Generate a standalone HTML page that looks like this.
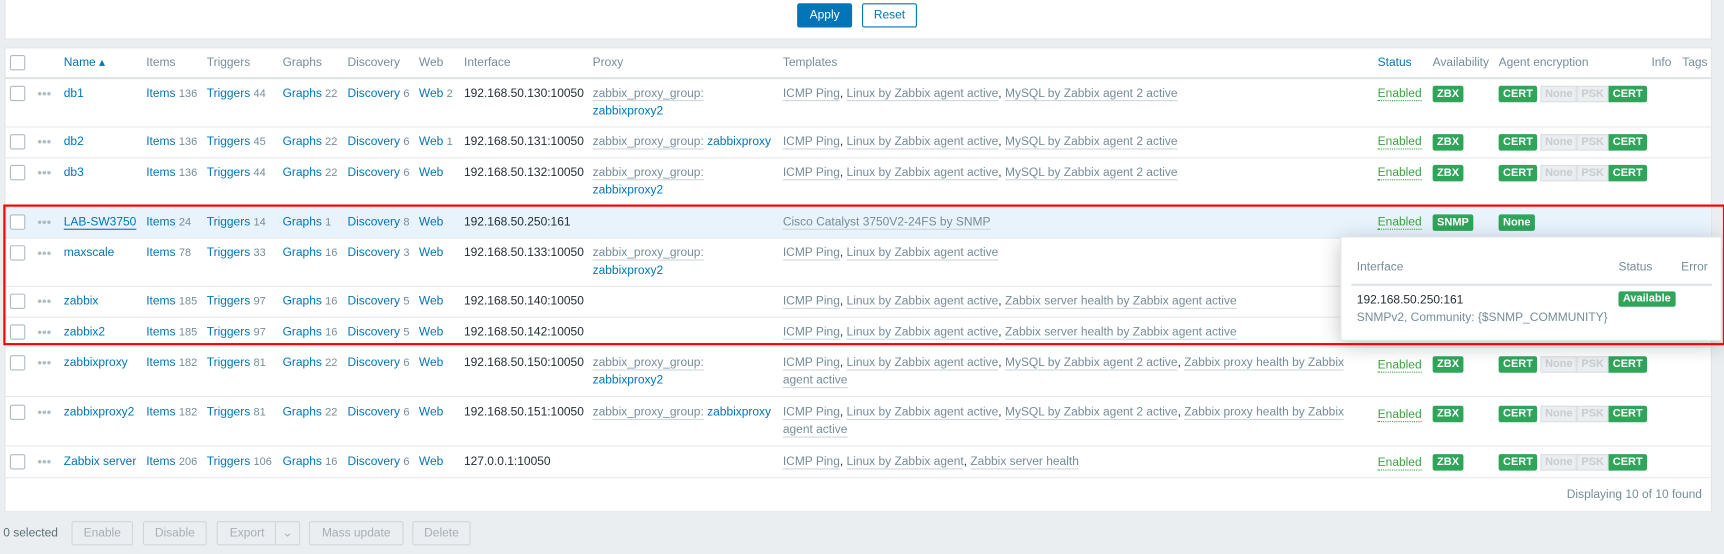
<!DOCTYPE html>
<html><head><meta charset="utf-8"><style>
*{box-sizing:border-box;margin:0;padding:0}
html,body{width:1724px;height:554px;overflow:hidden;background:#ebeef0}
#w{position:absolute;left:0;top:0;width:1568px;height:504px;transform:scale(1.0995);transform-origin:0 0;font-family:"Liberation Sans",Arial,sans-serif;font-size:10.9px;color:#1f2c33}
.abs{position:absolute;white-space:nowrap}
.panel{position:absolute;background:#fff;border:1px solid #dfe4e7}
a,.l{color:#0275b8;text-decoration:none}
.g{color:#768d99}
.n{color:#768d99;font-size:10px}
.row{position:absolute;left:5px;width:1551px;border-bottom:1px solid #e6e9eb}
.row>span{position:absolute;white-space:nowrap;line-height:16px}
.cb{position:absolute;width:14px;height:14px;border:1px solid #acbbc2;border-radius:2px;background:#fff}
.dots{color:#acbbc2;letter-spacing:0px;font-size:12px}
.tp{color:#768d99;border-bottom:1px solid #d0d7da}
.en{color:#429e47;border-bottom:1px dotted #429e47}
.b{display:inline-block;background:#2fa55a;color:#fff;font-weight:bold;font-size:10px;line-height:15px;padding:0 4px;border-radius:2px}
.bg{display:inline-block;background:#ebeef0;color:#c5cdd1;font-weight:bold;font-size:10px;line-height:13px;padding:0 3px;border:1px solid #d9dfe2}
.hd{color:#768d99}
.btn{position:absolute;height:22px;line-height:20px;text-align:center;border:1px solid #cfd6da;color:#a3b0b7;background:#ebeef0;border-radius:2px}
</style></head><body><div id="w">
<div class="panel" style="left:4px;top:-1px;width:1553px;height:37px"></div>
<div class="abs" style="left:725px;top:3px;width:50px;height:22px;background:#0275b8;color:#fff;text-align:center;line-height:22px;border-radius:2px">Apply</div>
<div class="abs" style="left:784px;top:3px;width:50px;height:22px;border:1px solid #0275b8;color:#0275b8;text-align:center;line-height:20px;border-radius:2px;background:#fff">Reset</div>

<div class="panel" style="left:4px;top:43px;width:1553px;height:423px"></div>
<div class="row" style="top:44px;height:28px;border-bottom:2px solid #dfe4e7">
<div class="cb" style="left:4px;top:6px"></div>
<span style="left:53px;top:5px" class="l">Name ▴</span>
<span class="hd" style="left:128px;top:5px">Items</span>
<span class="hd" style="left:183px;top:5px">Triggers</span>
<span class="hd" style="left:252px;top:5px">Graphs</span>
<span class="hd" style="left:311px;top:5px">Discovery</span>
<span class="hd" style="left:376px;top:5px">Web</span>
<span class="hd" style="left:417px;top:5px">Interface</span>
<span class="hd" style="left:534px;top:5px">Proxy</span>
<span class="hd" style="left:707px;top:5px">Templates</span>
<span class="l" style="left:1248px;top:5px">Status</span>
<span class="hd" style="left:1298px;top:5px">Availability</span>
<span class="hd" style="left:1358px;top:5px">Agent encryption</span>
<span class="hd" style="left:1497px;top:5px">Info</span>
<span class="hd" style="left:1525px;top:5px">Tags</span>
</div>

<div class="row" style="top:72px;height:44px">
<div class="cb" style="left:4px;top:6px"></div><span class="dots" style="left:29px;top:5px">•••</span>
<span style="left:53px;top:5px"><a>db1</a></span>
<span style="left:128px;top:5px"><a>Items</a> <span class="n">136</span></span>
<span style="left:183px;top:5px"><a>Triggers</a> <span class="n">44</span></span>
<span style="left:252px;top:5px"><a>Graphs</a> <span class="n">22</span></span>
<span style="left:311px;top:5px"><a>Discovery</a> <span class="n">6</span></span>
<span style="left:376px;top:5px"><a>Web</a> <span class="n">2</span></span>
<span style="left:417px;top:5px">192.168.50.130:10050</span>
<span style="left:534px;top:5px"><span class="tp">zabbix_proxy_group:</span><br><a>zabbixproxy2</a></span>
<span style="left:707px;top:5px"><span class="tp">ICMP Ping</span>, <span class="tp">Linux by Zabbix agent active</span>, <span class="tp">MySQL by Zabbix agent 2 active</span></span>
<span style="left:1248px;top:5px"><span class="en">Enabled</span></span>
<span style="left:1298px;top:5px"><span class="b">ZBX</span></span>
<span style="left:1358px;top:5px"><span class="b">CERT</span> <span class="bg">None</span><span class="bg">PSK</span><span class="b" style="border-radius:0 2px 2px 0">CERT</span></span>
</div>
<div class="row" style="top:116px;height:28px">
<div class="cb" style="left:4px;top:6px"></div><span class="dots" style="left:29px;top:5px">•••</span>
<span style="left:53px;top:5px"><a>db2</a></span>
<span style="left:128px;top:5px"><a>Items</a> <span class="n">136</span></span>
<span style="left:183px;top:5px"><a>Triggers</a> <span class="n">45</span></span>
<span style="left:252px;top:5px"><a>Graphs</a> <span class="n">22</span></span>
<span style="left:311px;top:5px"><a>Discovery</a> <span class="n">6</span></span>
<span style="left:376px;top:5px"><a>Web</a> <span class="n">1</span></span>
<span style="left:417px;top:5px">192.168.50.131:10050</span>
<span style="left:534px;top:5px"><span class="tp">zabbix_proxy_group:</span> <a>zabbixproxy</a></span>
<span style="left:707px;top:5px"><span class="tp">ICMP Ping</span>, <span class="tp">Linux by Zabbix agent active</span>, <span class="tp">MySQL by Zabbix agent 2 active</span></span>
<span style="left:1248px;top:5px"><span class="en">Enabled</span></span>
<span style="left:1298px;top:5px"><span class="b">ZBX</span></span>
<span style="left:1358px;top:5px"><span class="b">CERT</span> <span class="bg">None</span><span class="bg">PSK</span><span class="b" style="border-radius:0 2px 2px 0">CERT</span></span>
</div>
<div class="row" style="top:144px;height:43px">
<div class="cb" style="left:4px;top:6px"></div><span class="dots" style="left:29px;top:5px">•••</span>
<span style="left:53px;top:5px"><a>db3</a></span>
<span style="left:128px;top:5px"><a>Items</a> <span class="n">136</span></span>
<span style="left:183px;top:5px"><a>Triggers</a> <span class="n">44</span></span>
<span style="left:252px;top:5px"><a>Graphs</a> <span class="n">22</span></span>
<span style="left:311px;top:5px"><a>Discovery</a> <span class="n">6</span></span>
<span style="left:376px;top:5px"><a>Web</a></span>
<span style="left:417px;top:5px">192.168.50.132:10050</span>
<span style="left:534px;top:5px"><span class="tp">zabbix_proxy_group:</span><br><a>zabbixproxy2</a></span>
<span style="left:707px;top:5px"><span class="tp">ICMP Ping</span>, <span class="tp">Linux by Zabbix agent active</span>, <span class="tp">MySQL by Zabbix agent 2 active</span></span>
<span style="left:1248px;top:5px"><span class="en">Enabled</span></span>
<span style="left:1298px;top:5px"><span class="b">ZBX</span></span>
<span style="left:1358px;top:5px"><span class="b">CERT</span> <span class="bg">None</span><span class="bg">PSK</span><span class="b" style="border-radius:0 2px 2px 0">CERT</span></span>
</div>
<div class="row" style="top:187px;height:30px;background:#e8f3fc">
<div class="cb" style="left:4px;top:8px"></div><span class="dots" style="left:29px;top:7px">•••</span>
<span style="left:53px;top:7px"><a style="border-bottom:1px solid #0275b8">LAB-SW3750</a></span>
<span style="left:128px;top:7px"><a>Items</a> <span class="n">24</span></span>
<span style="left:183px;top:7px"><a>Triggers</a> <span class="n">14</span></span>
<span style="left:252px;top:7px"><a>Graphs</a> <span class="n">1</span></span>
<span style="left:311px;top:7px"><a>Discovery</a> <span class="n">8</span></span>
<span style="left:376px;top:7px"><a>Web</a></span>
<span style="left:417px;top:7px">192.168.50.250:161</span>
<span style="left:707px;top:7px"><span class="tp">Cisco Catalyst 3750V2-24FS by SNMP</span></span>
<span style="left:1248px;top:7px"><span class="en">Enabled</span></span>
<span style="left:1298px;top:7px"><span class="b">SNMP</span></span>
<span style="left:1358px;top:7px"><span class="b">None</span></span>
</div>
<div class="row" style="top:217px;height:44px">
<div class="cb" style="left:4px;top:6px"></div><span class="dots" style="left:29px;top:5px">•••</span>
<span style="left:53px;top:5px"><a>maxscale</a></span>
<span style="left:128px;top:5px"><a>Items</a> <span class="n">78</span></span>
<span style="left:183px;top:5px"><a>Triggers</a> <span class="n">33</span></span>
<span style="left:252px;top:5px"><a>Graphs</a> <span class="n">16</span></span>
<span style="left:311px;top:5px"><a>Discovery</a> <span class="n">3</span></span>
<span style="left:376px;top:5px"><a>Web</a></span>
<span style="left:417px;top:5px">192.168.50.133:10050</span>
<span style="left:534px;top:5px"><span class="tp">zabbix_proxy_group:</span><br><a>zabbixproxy2</a></span>
<span style="left:707px;top:5px"><span class="tp">ICMP Ping</span>, <span class="tp">Linux by Zabbix agent active</span></span>
</div>
<div class="row" style="top:261px;height:28px">
<div class="cb" style="left:4px;top:6px"></div><span class="dots" style="left:29px;top:5px">•••</span>
<span style="left:53px;top:5px"><a>zabbix</a></span>
<span style="left:128px;top:5px"><a>Items</a> <span class="n">185</span></span>
<span style="left:183px;top:5px"><a>Triggers</a> <span class="n">97</span></span>
<span style="left:252px;top:5px"><a>Graphs</a> <span class="n">16</span></span>
<span style="left:311px;top:5px"><a>Discovery</a> <span class="n">5</span></span>
<span style="left:376px;top:5px"><a>Web</a></span>
<span style="left:417px;top:5px">192.168.50.140:10050</span>
<span style="left:707px;top:5px"><span class="tp">ICMP Ping</span>, <span class="tp">Linux by Zabbix agent active</span>, <span class="tp">Zabbix server health by Zabbix agent active</span></span>
</div>
<div class="row" style="top:289px;height:27px">
<div class="cb" style="left:4px;top:6px"></div><span class="dots" style="left:29px;top:5px">•••</span>
<span style="left:53px;top:5px"><a>zabbix2</a></span>
<span style="left:128px;top:5px"><a>Items</a> <span class="n">185</span></span>
<span style="left:183px;top:5px"><a>Triggers</a> <span class="n">97</span></span>
<span style="left:252px;top:5px"><a>Graphs</a> <span class="n">16</span></span>
<span style="left:311px;top:5px"><a>Discovery</a> <span class="n">5</span></span>
<span style="left:376px;top:5px"><a>Web</a></span>
<span style="left:417px;top:5px">192.168.50.142:10050</span>
<span style="left:707px;top:5px"><span class="tp">ICMP Ping</span>, <span class="tp">Linux by Zabbix agent active</span>, <span class="tp">Zabbix server health by Zabbix agent active</span></span>
</div>
<div class="row" style="top:316px;height:45px">
<div class="cb" style="left:4px;top:7px"></div><span class="dots" style="left:29px;top:6px">•••</span>
<span style="left:53px;top:6px"><a>zabbixproxy</a></span>
<span style="left:128px;top:6px"><a>Items</a> <span class="n">182</span></span>
<span style="left:183px;top:6px"><a>Triggers</a> <span class="n">81</span></span>
<span style="left:252px;top:6px"><a>Graphs</a> <span class="n">22</span></span>
<span style="left:311px;top:6px"><a>Discovery</a> <span class="n">6</span></span>
<span style="left:376px;top:6px"><a>Web</a></span>
<span style="left:417px;top:6px">192.168.50.150:10050</span>
<span style="left:534px;top:6px"><span class="tp">zabbix_proxy_group:</span><br><a>zabbixproxy2</a></span>
<span style="left:707px;top:6px"><span class="tp">ICMP Ping</span>, <span class="tp">Linux by Zabbix agent active</span>, <span class="tp">MySQL by Zabbix agent 2 active</span>, <span class="tp">Zabbix proxy health by Zabbix</span><br><span class="tp">agent active</span></span>
<span style="left:1248px;top:8px"><span class="en">Enabled</span></span>
<span style="left:1298px;top:7px"><span class="b">ZBX</span></span>
<span style="left:1358px;top:7px"><span class="b">CERT</span> <span class="bg">None</span><span class="bg">PSK</span><span class="b" style="border-radius:0 2px 2px 0">CERT</span></span>
</div>
<div class="row" style="top:361px;height:45px">
<div class="cb" style="left:4px;top:7px"></div><span class="dots" style="left:29px;top:6px">•••</span>
<span style="left:53px;top:6px"><a>zabbixproxy2</a></span>
<span style="left:128px;top:6px"><a>Items</a> <span class="n">182</span></span>
<span style="left:183px;top:6px"><a>Triggers</a> <span class="n">81</span></span>
<span style="left:252px;top:6px"><a>Graphs</a> <span class="n">22</span></span>
<span style="left:311px;top:6px"><a>Discovery</a> <span class="n">6</span></span>
<span style="left:376px;top:6px"><a>Web</a></span>
<span style="left:417px;top:6px">192.168.50.151:10050</span>
<span style="left:534px;top:6px"><span class="tp">zabbix_proxy_group:</span> <a>zabbixproxy</a></span>
<span style="left:707px;top:6px"><span class="tp">ICMP Ping</span>, <span class="tp">Linux by Zabbix agent active</span>, <span class="tp">MySQL by Zabbix agent 2 active</span>, <span class="tp">Zabbix proxy health by Zabbix</span><br><span class="tp">agent active</span></span>
<span style="left:1248px;top:8px"><span class="en">Enabled</span></span>
<span style="left:1298px;top:7px"><span class="b">ZBX</span></span>
<span style="left:1358px;top:7px"><span class="b">CERT</span> <span class="bg">None</span><span class="bg">PSK</span><span class="b" style="border-radius:0 2px 2px 0">CERT</span></span>
</div>
<div class="row" style="top:406px;height:29px">
<div class="cb" style="left:4px;top:7px"></div><span class="dots" style="left:29px;top:6px">•••</span>
<span style="left:53px;top:6px"><a>Zabbix server</a></span>
<span style="left:128px;top:6px"><a>Items</a> <span class="n">206</span></span>
<span style="left:183px;top:6px"><a>Triggers</a> <span class="n">106</span></span>
<span style="left:252px;top:6px"><a>Graphs</a> <span class="n">16</span></span>
<span style="left:311px;top:6px"><a>Discovery</a> <span class="n">6</span></span>
<span style="left:376px;top:6px"><a>Web</a></span>
<span style="left:417px;top:6px">127.0.0.1:10050</span>
<span style="left:707px;top:6px"><span class="tp">ICMP Ping</span>, <span class="tp">Linux by Zabbix agent</span>, <span class="tp">Zabbix server health</span></span>
<span style="left:1248px;top:7px"><span class="en">Enabled</span></span>
<span style="left:1298px;top:6px"><span class="b">ZBX</span></span>
<span style="left:1358px;top:6px"><span class="b">CERT</span> <span class="bg">None</span><span class="bg">PSK</span><span class="b" style="border-radius:0 2px 2px 0">CERT</span></span>
</div>
<div class="abs g" style="left:1425px;top:444px">Displaying 10 of 10 found</div>

<div class="abs" style="left:1219px;top:215px;width:347px;height:95px;background:#fff;border:1px solid #dfe4e7;box-shadow:0 4px 18px rgba(0,0,0,.25)"></div>
<div class="abs hd" style="left:1234px;top:237px">Interface</div>
<div class="abs hd" style="left:1472px;top:237px">Status</div>
<div class="abs hd" style="left:1529px;top:237px">Error</div>
<div class="abs" style="left:1229px;top:258px;width:328px;height:2px;background:#dfe4e7"></div>
<div class="abs" style="left:1234px;top:267px">192.168.50.250:161</div>
<div class="abs g" style="left:1234px;top:283px">SNMPv2, Community: {$SNMP_COMMUNITY}</div>
<div class="abs" style="left:1472px;top:265px"><span class="b" style="line-height:14px;padding:0 4px">Available</span></div>

<div class="abs" style="left:3px;top:186px;width:1566px;height:128px;border:2px solid #f00"></div>

<div class="abs g" style="left:3px;top:479px;color:#5c6f79">0 selected</div>
<div class="btn" style="left:65px;top:474px;width:56px">Enable</div>
<div class="btn" style="left:130px;top:474px;width:58px">Disable</div>
<div class="btn" style="left:197px;top:474px;width:76px;text-align:left;padding-left:11px">Export<span style="position:absolute;left:52px;top:0;height:20px;border-left:1px solid #cfd6da;width:22px;text-align:center">⌄</span></div>
<div class="btn" style="left:281px;top:474px;width:86px">Mass update</div>
<div class="btn" style="left:375px;top:474px;width:53px">Delete</div>
</div></body></html>
